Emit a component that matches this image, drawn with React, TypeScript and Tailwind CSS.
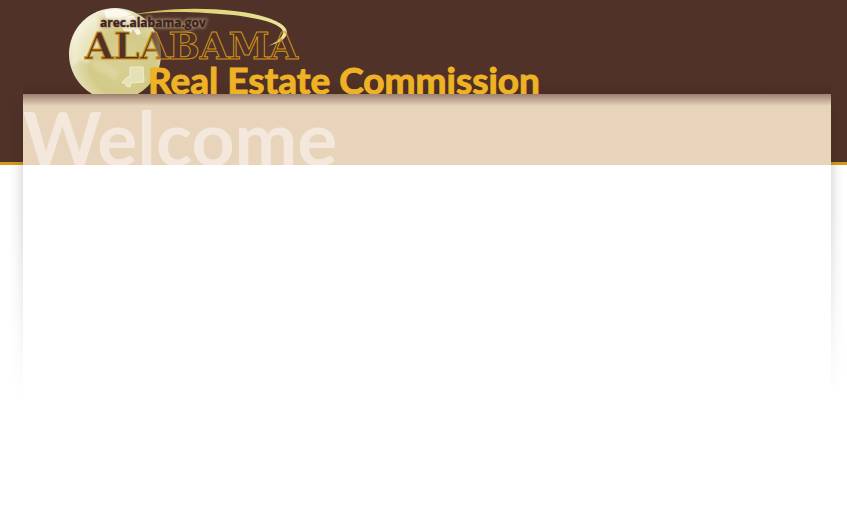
function Logo() {
  return (
    <svg
      viewBox="0 0 480 94"
      className="block h-[94px] w-[480px] overflow-hidden"
      role="img"
      aria-label="arec.alabama.gov, Alabama Real Estate Commission"
    >
      <defs>
        <radialGradient id="globe" cx="0.58" cy="0.6" r="0.64">
          <stop offset="0" stopColor="#d8cf93" />
          <stop offset="0.55" stopColor="#d3ca88" />
          <stop offset="0.85" stopColor="#e6e1bb" />
          <stop offset="1" stopColor="#f5f3e2" />
        </radialGradient>
        <linearGradient id="swoosh" x1="0" y1="0" x2="1" y2="0">
          <stop offset="0" stopColor="#d6ca58" stopOpacity="0.7" />
          <stop offset="0.4" stopColor="#ddd272" />
          <stop offset="1" stopColor="#ece49c" />
        </linearGradient>
        <linearGradient id="letters" x1="0" y1="0" x2="1" y2="0">
          <stop offset="0.28" stopColor="#503228" />
          <stop offset="0.38" stopColor="#503228" stopOpacity="0.5" />
          <stop offset="0.45" stopColor="#503228" stopOpacity="0" />
        </linearGradient>
        <filter id="soft" x="-20%" y="-20%" width="140%" height="140%">
          <feGaussianBlur stdDeviation="1.4" />
        </filter>
      </defs>

      <circle cx="46" cy="54" r="46" fill="url(#globe)" />
      <path
        d="M35 11l12-2 10 2 8 5 4 7 1 6 2 5-4 1-4-6-3 5-6-3-4-7-8-3-6-3z"
        fill="#fffff8"
        opacity="0.8"
      />
      <path
        d="M5 36q8-15 22-20l8 8-8 10 4 12-8 8-4 10-8-4-7 6q-2-16 1-30z"
        fill="#fffff0"
        opacity="0.4"
        filter="url(#soft)"
      />
      <path
        d="M20 62l12-2 10 5 8 8-4 8-8-6-10-4z"
        fill="#fffff0"
        opacity="0.15"
        filter="url(#soft)"
      />
      <path
        d="M61 67h13l1 15-13 1-1 4-4-1v-3h-4l4-5 4-2z"
        fill="#e9e4bd"
        stroke="#fbf9e4"
        strokeWidth="0.8"
        opacity="0.85"
      />

      <text
        x="31"
        y="27"
        fontSize="12"
        className="font-['Open_Sans'] font-bold"
        fill="#e8d8a8"
        stroke="#c6b189"
        strokeWidth="3"
        opacity="0.6"
        filter="url(#soft)"
        aria-hidden="true"
      >
        arec.alabama.gov
      </text>
      <path
        d="M50 18C85 8 130 7 165 11c35 4 54 13 53 22-1 6-8 10-19 13 9-4 14-8 15-13 1-7-16-14-50-18-34-3-78-6-114 3z"
        fill="url(#swoosh)"
      />
      <text
        x="31"
        y="27"
        fontSize="12"
        className="font-['Open_Sans'] font-bold"
        fill="#3c231b"
        stroke="#3c231b"
        strokeWidth="0.4"
      >
        arec.alabama.gov
      </text>
      <text
        x="16"
        y="59"
        fontSize="37"
        className="font-['DejaVu_Serif'] font-bold"
        fill="url(#letters)"
        stroke="#cf931b"
        strokeWidth="1"
      >
        ALABAMA
      </text>
      <text
        x="79"
        y="94"
        fontSize="37"
        className="font-['Lato'] font-bold"
        fill="#efb225"
        stroke="#efb225"
        strokeWidth="1"
      >
        Real Estate Commission
      </text>
    </svg>
  );
}

function SideShadow({ side }: { side: "left" | "right" }) {
  return (
    <div
      aria-hidden="true"
      className={
        side === "left"
          ? "h-[306px] bg-linear-to-l from-[#2d1c1020] via-[#2d1c100c] via-25% to-[#2d1c1000] to-60% mask-[linear-gradient(to_bottom,transparent,black_20px,black_120px,transparent)]"
          : "h-[306px] bg-linear-to-r from-[#2d1c1020] via-[#2d1c100c] via-35% to-[#2d1c1000] to-80% mask-[linear-gradient(to_bottom,transparent,black_20px,black_120px,transparent)]"
      }
    />
  );
}

export default function App() {
  return (
    <div className="min-h-screen bg-white bg-[linear-gradient(to_bottom,#503228_162px,#d59b1b_162px,#d59b1b_165px,#ffffff_165px)]">
      <header className="mr-4 ml-[23px] bg-linear-to-b from-transparent from-85% to-[#3c1e1440] pl-[46px]">
        <a href="/" className="block w-fit">
          <Logo />
        </a>
      </header>
      <div className="grid grid-cols-[23px_1fr_16px]">
        <SideShadow side="left" />
        <main>
          <div className="h-[71px] overflow-hidden bg-[#e7d4ba] bg-linear-to-b from-[#9d8070] to-[#e7d4ba] to-[12px]">
            <h1 className="pt-[5px] font-['Lato'] text-[75px]/[76px] font-bold text-[#f3e8db]">
              Welcome
            </h1>
          </div>
        </main>
        <SideShadow side="right" />
      </div>
    </div>
  );
}
